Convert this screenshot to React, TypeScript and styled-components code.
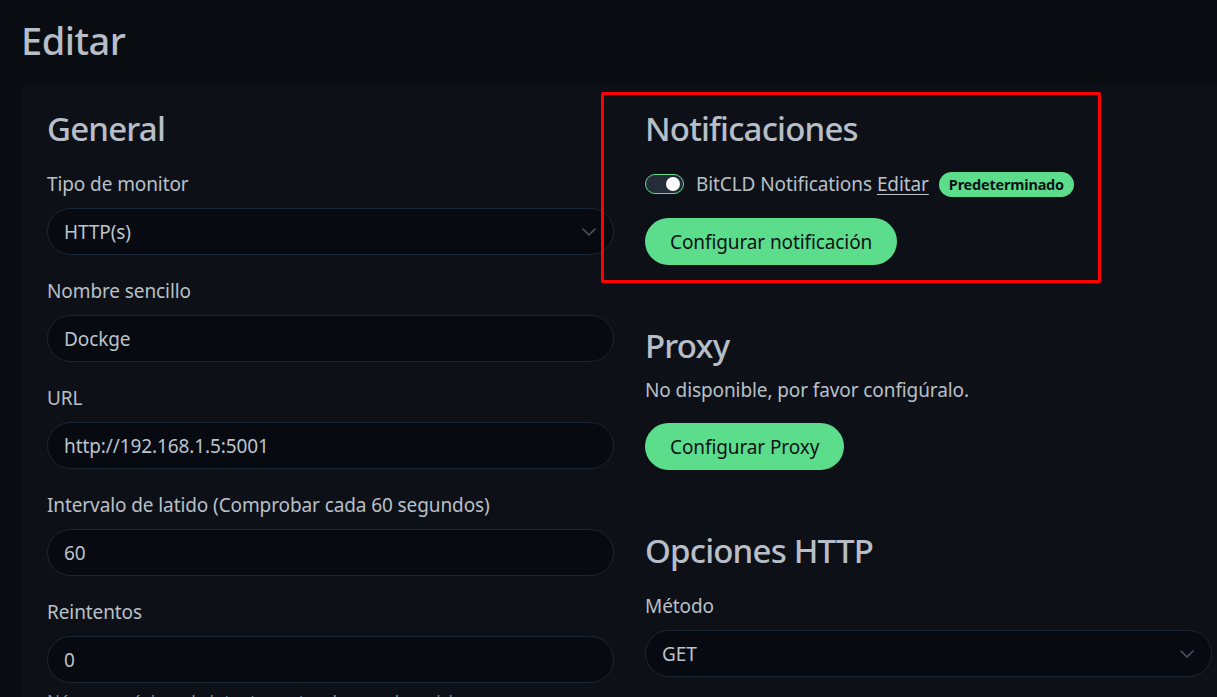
import React from 'react'
import styled, { createGlobalStyle } from 'styled-components'

const GlobalStyle = createGlobalStyle`
  html, body {
    margin: 0;
    padding: 0;
    background: #090c10;
    overflow: hidden;
  }
  body {
    font-family: 'Noto Sans', 'Open Sans', sans-serif;
    color: #b9c0c8;
    letter-spacing: -0.1px;
  }
  * {
    box-sizing: border-box;
  }
`

const Page = styled.div`
  position: relative;
  width: 1260px;
  height: 697px;
  padding-left: 21px;
  background: #090c10;
`

const PageTitle = styled.h1`
  margin: 0;
  padding-top: 17px;
  font-size: 38px;
  line-height: 47px;
  font-weight: 500;
  letter-spacing: -0.5px;
  color: #b7bec7;
`

const Card = styled.div`
  margin-top: 20px;
  height: 640px;
  padding: 24px 0 0 26px;
  background: #0d1117;
  border-radius: 10px;
`

const Columns = styled.div`
  display: grid;
  grid-template-columns: 567px 567px;
  column-gap: 31px;
`

const Column = styled.div`
  display: flex;
  flex-direction: column;
`

const Section = styled.section<{ $top?: number }>`
  margin-top: ${(p) => p.$top || 0}px;
`

const SectionTitle = styled.h2<{ $gap?: number }>`
  margin: 0 0 ${(p) => (p.$gap === undefined ? 19 : p.$gap)}px;
  font-size: 33px;
  line-height: 42px;
  font-weight: 500;
  letter-spacing: -0.8px;
  color: #b7bec7;
`

const FieldGroup = styled.div`
  margin-bottom: 21px;
`

const FieldLabel = styled.label`
  display: block;
  margin-bottom: 9px;
  font-size: 19px;
  line-height: 30px;
`

const InputBox = styled.div`
  position: relative;
  height: 47px;
  display: flex;
  align-items: center;
  padding: 0 16px;
  background: #070a10;
  border: 1px solid #1d2634;
  border-radius: 24px;
  font-size: 19px;
  color: #bcc3cb;
`

const Chevron = styled.svg`
  position: absolute;
  right: 17px;
  top: 50%;
  margin-top: -4px;
  width: 14px;
  height: 8px;
`

const HelpText = styled.div`
  margin-top: 5px;
  font-size: 17px;
  line-height: 26px;
  color: #8a929c;
`

const NotifRow = styled.div`
  display: flex;
  align-items: center;
  height: 30px;
  margin-bottom: 19px;
  font-size: 19px;
`

const Toggle = styled.span<{ $on?: boolean }>`
  position: relative;
  flex: none;
  width: 39px;
  height: 20px;
  margin-right: 12px;
  border-radius: 10px;
  background: #232c37;
  border: 1px solid ${(p) => (p.$on ? '#5cdd8b' : '#3a4450')};

  &::after {
    content: '';
    position: absolute;
    top: 2px;
    ${(p) => (p.$on ? 'right: 3px;' : 'left: 3px;')}
    width: 14px;
    height: 14px;
    border-radius: 50%;
    background: #ffffff;
  }
`

const EditLink = styled.a`
  margin-left: 5px;
  color: #bcc3cb;
  text-decoration: underline;
  text-underline-offset: 3px;
`

const Badge = styled.span`
  margin-left: 10px;
  height: 25px;
  padding: 0 10px;
  display: inline-flex;
  align-items: center;
  border-radius: 13px;
  background: #5cdd8b;
  color: #0d1117;
  font-size: 14.5px;
  font-weight: 700;
  letter-spacing: -0.2px;
`

const Button = styled.button`
  align-self: flex-start;
  height: 47px;
  padding: 0 25px;
  border: none;
  border-radius: 24px;
  background: #5cdd8b;
  color: #0e1116;
  font-family: inherit;
  font-size: 19px;
  letter-spacing: -0.1px;
  cursor: pointer;
`

const Note = styled.p`
  margin: 0 0 18px;
  font-size: 19px;
  line-height: 30px;
`

const Highlight = styled.div`
  position: absolute;
  left: 601px;
  top: 92px;
  width: 500px;
  height: 191px;
  border: 3px solid #ff0000;
  border-radius: 2px;
  pointer-events: none;
`

const SelectField = ({ value }: { value: string }) => (
  <InputBox>
    {value}
    <Chevron viewBox="0 0 14 8" fill="none">
      <path d="M1 1l6 6 6-6" stroke="#4a5361" strokeWidth="1.6" strokeLinecap="round" strokeLinejoin="round" />
    </Chevron>
  </InputBox>
)

const TextField = ({ label, value }: { label: string; value: string }) => (
  <FieldGroup>
    <FieldLabel>{label}</FieldLabel>
    <InputBox>{value}</InputBox>
  </FieldGroup>
)

export default function App() {
  return (
    <>
      <GlobalStyle />
      <Page>
        <PageTitle>Editar</PageTitle>
        <Card>
          <Columns>
            <Column>
              <SectionTitle>General</SectionTitle>
              <FieldGroup>
                <FieldLabel>Tipo de monitor</FieldLabel>
                <SelectField value="HTTP(s)" />
              </FieldGroup>
              <TextField label="Nombre sencillo" value="Dockge" />
              <TextField label="URL" value="http://192.168.1.5:5001" />
              <TextField label="Intervalo de latido (Comprobar cada 60 segundos)" value="60" />
              <div>
                <FieldLabel>Reintentos</FieldLabel>
                <InputBox>0</InputBox>
                <HelpText>
                  Número máximo de intentos antes de que el servicio se marque como caído y se envíe una notificación
                </HelpText>
              </div>
            </Column>

            <Column>
              <Section>
                <SectionTitle>Notificaciones</SectionTitle>
                <NotifRow>
                  <Toggle $on />
                  BitCLD Notifications
                  <EditLink>Editar</EditLink>
                  <Badge>Predeterminado</Badge>
                </NotifRow>
                <Button>Configurar notificación</Button>
              </Section>

              <Section $top={60}>
                <SectionTitle $gap={8}>Proxy</SectionTitle>
                <Note>No disponible, por favor configúralo.</Note>
                <Button>Configurar Proxy</Button>
              </Section>

              <Section $top={60}>
                <SectionTitle>Opciones HTTP</SectionTitle>
                <FieldLabel>Método</FieldLabel>
                <SelectField value="GET" />
              </Section>
            </Column>
          </Columns>
        </Card>
        <Highlight />
      </Page>
    </>
  )
}
